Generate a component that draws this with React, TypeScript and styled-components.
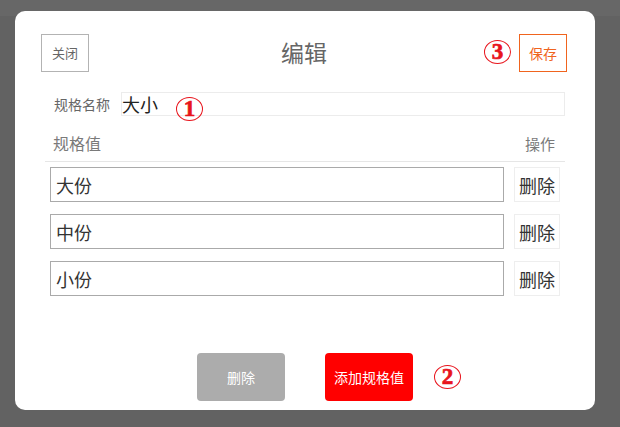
import styled, { createGlobalStyle } from 'styled-components';

const GlobalStyle = createGlobalStyle`
  html, body {
    margin: 0;
    padding: 0;
    background: #626262;
    font-family: "Noto Sans CJK SC", "Noto Sans", sans-serif;
  }
`;

const specValues = ['大份', '中份', '小份'];

type IMark = {
  $left: number;
  $top: number;
};

const App = (): JSX.Element => {
  return (
    <>
      <GlobalStyle />
      <Page>
        <TopBand />
        <Modal>
          <Header>
            <OutlineButton $color="#666" $border="#b3b3b3">关闭</OutlineButton>
            <Title>编辑</Title>
            <OutlineButton $color="#f0641e" $border="#f0641e" $size={14}>保存</OutlineButton>
          </Header>

          <Content>
            <NameRow>
              <NameLabel>规格名称</NameLabel>
              <NameInput defaultValue="大小" />
            </NameRow>

            <TableHead>
              <HeadCell>规格值</HeadCell>
              <HeadCell $small>操作</HeadCell>
            </TableHead>

            <ValueList>
              {specValues.map(value => (
                <ValueRow key={value}>
                  <ValueInput defaultValue={value} />
                  <RowDelete>删除</RowDelete>
                </ValueRow>
              ))}
            </ValueList>
          </Content>

          <Footer>
            <FooterButton $bg="#acacac">删除</FooterButton>
            <FooterButton $bg="#ff0000">添加规格值</FooterButton>
          </Footer>

          {/* annotation marks drawn over the screenshot, page coords */}
          <Mark $left={176} $top={97}>1</Mark>
          <Mark $left={434} $top={365}>2</Mark>
          <Mark $left={484} $top={40}>3</Mark>
        </Modal>
      </Page>
    </>
  );
};

export default App;

const Page = styled.div`
  position: relative;
  width: 620px;
  height: 427px;
  overflow: hidden;
  padding: 11px 0 0 15px;
  box-sizing: border-box;
`;

const TopBand = styled.div`
  position: absolute;
  left: 0;
  top: 0;
  width: 620px;
  height: 16px;
  background: #676767;
`;

const Modal = styled.div`
  position: relative;
  width: 580px;
  height: 399px;
  background: #fff;
  border-radius: 10px;
  display: flex;
  flex-direction: column;
  box-sizing: border-box;
  padding: 22px 0 9px;
`;

const Header = styled.div`
  display: flex;
  align-items: center;
  justify-content: space-between;
  padding: 0 28px 0 26px;
  height: 39px;
`;

const OutlineButton = styled.div<{ $color: string; $border: string; $size?: number }>`
  width: 48px;
  height: 38px;
  box-sizing: border-box;
  border: 1px solid ${props => props.$border};
  color: ${props => props.$color};
  font-size: ${props => props.$size ?? 13}px;
  display: flex;
  align-items: center;
  justify-content: center;
  background: #fff;
`;

const Title = styled.div`
  font-size: 23px;
  color: #666;
  line-height: 1;
`;

const Content = styled.div`
  padding: 0 30px;
`;

const NameRow = styled.div`
  display: flex;
  align-items: center;
  gap: 10px;
  margin-top: 20px;
  padding-left: 9px;
`;

const NameLabel = styled.span`
  font-size: 14px;
  color: #666;
  width: 57px;
  white-space: nowrap;
`;

const NameInput = styled.input`
  flex: 1;
  height: 24px;
  box-sizing: border-box;
  border: 1px solid #ececec;
  padding: 0;
  font-family: inherit;
  font-size: 18px;
  color: #222;
  outline: none;
`;

const TableHead = styled.div`
  height: 46px;
  box-sizing: border-box;
  padding: 9px 10px 0 8px;
  display: flex;
  align-items: center;
  justify-content: space-between;
  border-bottom: 1px solid #e6e6e6;
`;

const HeadCell = styled.span<{ $small?: boolean }>`
  font-size: ${props => (props.$small ? '15px' : '16px')};
  color: #7a7a7a;
`;

const ValueList = styled.div`
  display: flex;
  flex-direction: column;
  gap: 12px;
  margin-top: 5px;
  padding: 0 5px;
`;

const ValueRow = styled.div`
  display: flex;
  gap: 10px;
  height: 35px;
`;

const ValueInput = styled.input`
  flex: 1;
  height: 35px;
  box-sizing: border-box;
  border: 1px solid #aaa;
  padding: 0 5px;
  font-family: inherit;
  font-size: 18px;
  color: #333;
  outline: none;
`;

const RowDelete = styled.div`
  width: 46px;
  box-sizing: border-box;
  border: 1px solid #eee;
  font-size: 18px;
  color: #333;
  display: flex;
  align-items: center;
  justify-content: center;
`;

const Footer = styled.div`
  margin-top: auto;
  display: flex;
  justify-content: center;
  gap: 40px;
`;

const FooterButton = styled.div<{ $bg: string }>`
  width: 88px;
  height: 48px;
  border-radius: 4px;
  background: ${props => props.$bg};
  color: #fff;
  font-size: 14px;
  display: flex;
  align-items: center;
  justify-content: center;
`;

const Mark = styled.span<IMark>`
  position: absolute;
  left: ${props => props.$left - 15}px;
  top: ${props => props.$top - 11}px;
  width: 27px;
  height: 24px;
  box-sizing: border-box;
  border: 1.5px solid #e8141c;
  border-radius: 50%;
  color: #e8141c;
  font-family: "Liberation Serif", serif;
  font-weight: 900;
  font-size: 23px;
  line-height: 21px;
  text-align: center;
  -webkit-text-stroke: 0.7px #e8141c;
`;
